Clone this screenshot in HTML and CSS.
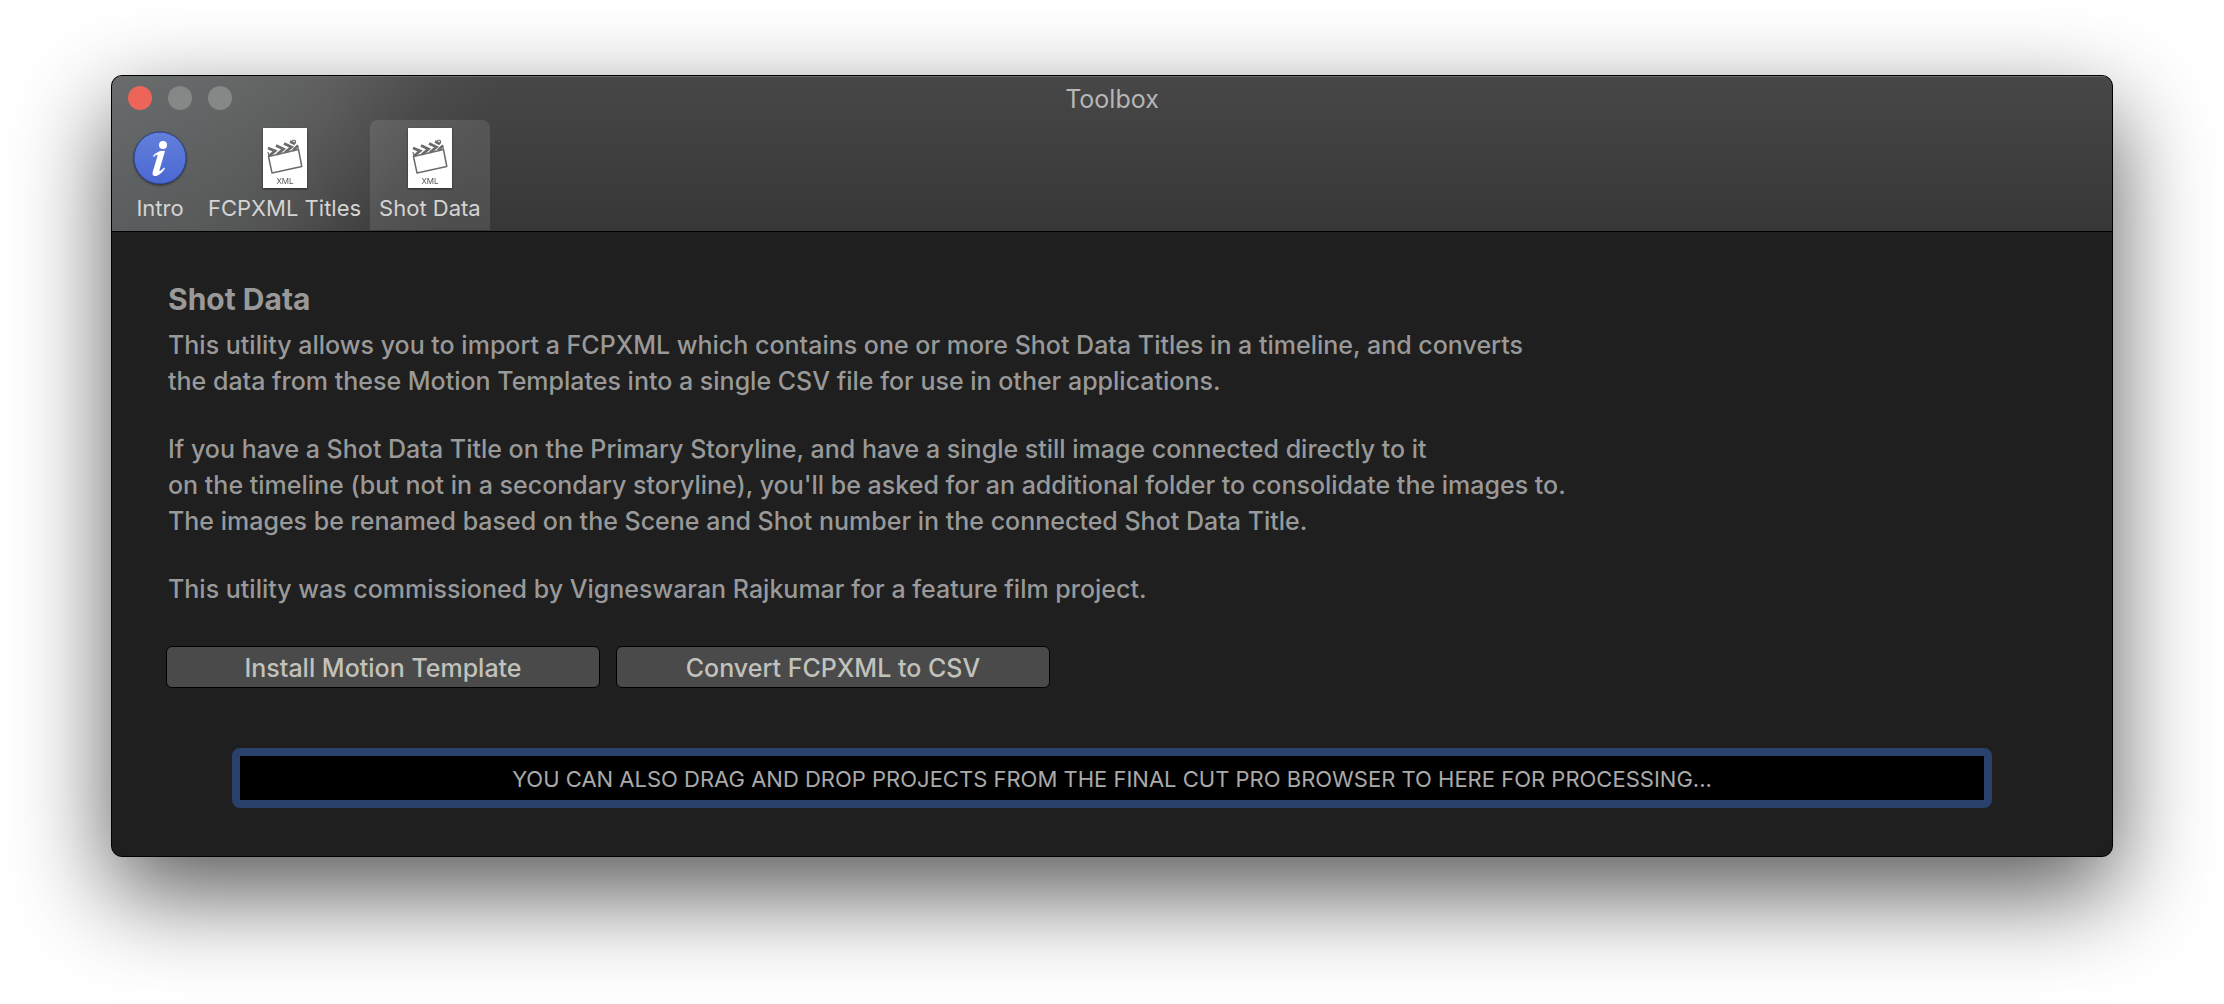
FILE: index.html
```html
<!DOCTYPE html>
<html lang="en">
<head>
<meta charset="utf-8">
<title>Toolbox</title>
<link rel="stylesheet" href="styles.css">
</head>
<body>
<svg class="defs" aria-hidden="true">
  <symbol id="xml-document" viewBox="0 0 44 60">
    <rect width="44" height="60" fill="#fff"/>
    <path d="M5.500 28.500 L35.500 21.500 L38.800 38.500 L9 45 Z" fill="none" stroke="#6b6b6b" stroke-width="1.500" stroke-linejoin="round"/>
    <path d="M5 20 L12 23 L6 28 M13 17.500 L20.500 21 L14 26.500 M21 15.500 L28.500 19 L22 24.500" fill="none" stroke="#6b6b6b" stroke-width="2.800"/>
    <path d="M35 17.500 L30 22.500 M27 13.500 L32 16" fill="none" stroke="#6b6b6b" stroke-width="2.600"/>
    <path d="M29 12.500 C33 11.500 33.500 14 31.500 16 M34.500 17.500 L35.500 22 M5 24 L6 29" fill="none" stroke="#6b6b6b" stroke-width="1.200"/>
    <text x="22" y="56" text-anchor="middle" class="xml-text">XML</text>
  </symbol>
</svg>
<main class="window">
  <header class="toolbar">
    <div class="titlebar">
      <div class="lights">
        <button class="light close" aria-label="Close"></button>
        <button class="light" aria-label="Minimize"></button>
        <button class="light" aria-label="Zoom"></button>
      </div>
      <h1 class="title">Toolbox</h1>
    </div>
    <nav class="tabs">
      <button class="tab">
        <svg class="icon round" viewBox="0 0 60 60" aria-hidden="true">
          <defs><linearGradient id="blue" x2="0" y2="1"><stop stop-color="#6480dc"/><stop offset="1" stop-color="#4a68d2"/></linearGradient></defs>
          <circle cx="30" cy="30" r="26" fill="url(#blue)" stroke="#2c418f"/>
          <circle cx="33" cy="17" r="4" fill="#fff"/>
          <path d="M23 28 C26 24 31 22 35 23 L29.500 42 C29 44 31 43 34 39.500 L35 40.500 C31 46 28 48 25.500 48 C22.500 48 22 46 23 43 L27.500 28 C28 26 26 26.500 24 29 Z" fill="#fff"/>
        </svg>
        <span>Intro</span>
      </button>
      <button class="tab">
        <svg class="icon page" aria-hidden="true"><use href="#xml-document"/></svg>
        <span>FCPXML Titles</span>
      </button>
      <button class="tab selected" aria-current="page">
        <svg class="icon page" aria-hidden="true"><use href="#xml-document"/></svg>
        <span>Shot Data</span>
      </button>
    </nav>
  </header>
  <section class="content">
    <h2>Shot Data</h2>
    <p>This utility allows you to import a FCPXML which contains one or more Shot Data Titles in a timeline, and converts<br>the data from these Motion Templates into a single CSV file for use in other applications.</p>
    <p>If you have a Shot Data Title on the Primary Storyline, and have a single still image connected directly to it<br>on the timeline (but not in a secondary storyline), you'll be asked for an additional folder to consolidate the images to.<br>The images be renamed based on the Scene and Shot number in the connected Shot Data Title.</p>
    <p>This utility was commissioned by Vigneswaran Rajkumar for a feature film project.</p>
    <div class="actions">
      <button class="action">Install Motion Template</button>
      <button class="action">Convert FCPXML to CSV</button>
    </div>
    <div class="drop">YOU CAN ALSO DRAG AND DROP PROJECTS FROM THE FINAL CUT PRO BROWSER TO HERE FOR PROCESSING...</div>
  </section>
</main>
</body>
</html>
```
FILE: styles.css
```css
* { box-sizing: border-box; }
body {
  margin: 0;
  padding: 75px 111px 147px;
  background: #fff;
  font-family: Inter, "Liberation Sans", sans-serif;
  overflow-x: hidden;
}
button { font: inherit; border: 0; padding: 0; background: none; color: inherit; }
.defs { position: absolute; width: 0; height: 0; }
.window {
  border: 1px solid #000;
  border-radius: 11px;
  background: #1f1f1f;
  overflow: hidden;
  box-shadow: 0 36px 96px rgba(0, 0, 0, .66);
}
.toolbar {
  padding-bottom: 1px;
  border-bottom: 1px solid #000;
  box-shadow: inset 0 1px #6c6c6c;
  background:
    linear-gradient(110deg, rgba(225, 240, 243, .22) 0, rgba(225, 235, 237, .19) 140px, rgba(230, 230, 230, .15) 210px, rgba(230, 230, 230, .04) 300px, rgba(230, 230, 230, 0) 370px),
    linear-gradient(#474747, #373737);
}
.titlebar {
  display: grid;
  grid-template-columns: 1fr auto 1fr;
  align-items: center;
  height: 44px;
  padding: 0 16px;
}
.lights { display: flex; gap: 16px; }
.light { width: 24px; height: 24px; border-radius: 50%; background: #868888; }
.close { background: #ed6559; }
.title { margin: 0; padding-top: 2px; font-size: 25px; font-weight: 400; line-height: 28px; color: #b6b6b6; }
.tabs { display: flex; padding-left: 9px; }
.tab {
  display: flex;
  flex-direction: column;
  align-items: center;
  gap: 6px;
  height: 110px;
  padding: 8px 9px 0;
  border-radius: 8px 8px 0 0;
  font-size: 22px;
  line-height: 28px;
  color: #d4d4d4;
}
.selected { background: rgba(255, 255, 255, .11); }
.icon { height: 60px; filter: drop-shadow(0 1px 1px rgba(0, 0, 0, .5)); }
.round { width: 60px; }
.page { width: 44px; }
.xml-text { font-size: 8px; fill: #555; }
.content { padding: 49px 54px 48px; color: #999; }
h2 { margin: 0 0 10px; padding-left: 2px; font-size: 30px; line-height: 36px; font-weight: 700; }
p { margin: 0 0 32px; padding-left: 2px; font-size: 25px; line-height: 36px; font-weight: 500; }
.actions { display: flex; gap: 16px; margin: 39px 0 60px; }
.action {
  width: 434px;
  height: 42px;
  padding-top: 2px;
  border: 1px solid #000;
  border-radius: 6px;
  background: #4a4a4a;
  color: #c2c2bc;
  font-size: 25px;
  font-weight: 500;
  line-height: 38px;
}
.drop {
  margin: 0 66px;
  padding-top: 2px;
  border: 8px solid #29416b;
  border-radius: 8px;
  background: #000;
  color: #aaa;
  font-size: 22px;
  line-height: 42px;
  text-align: center;
}
```
